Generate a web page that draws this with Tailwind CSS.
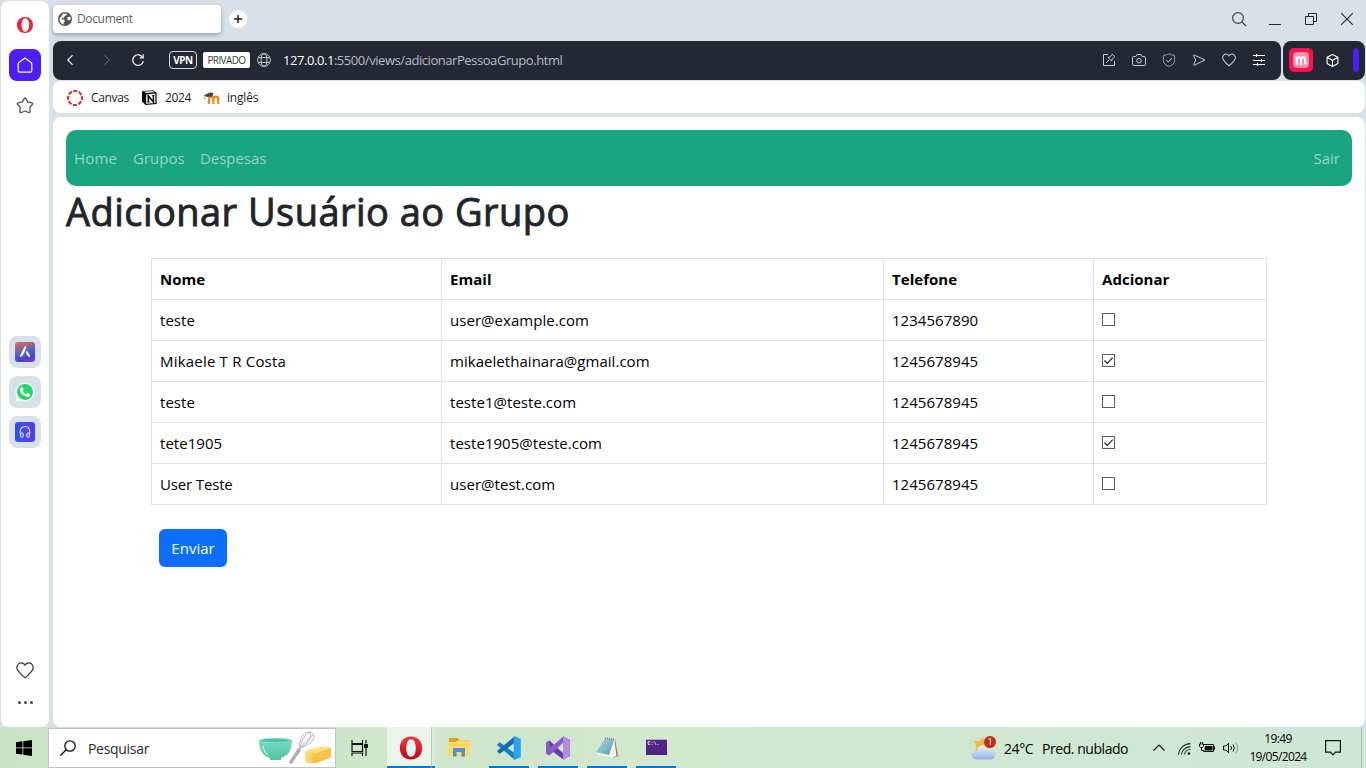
<!DOCTYPE html>
<html lang="pt-BR">
<head>
<meta charset="utf-8">
<title>Document</title>
<script src="https://cdn.jsdelivr.net/npm/@tailwindcss/browser@4"></script>
</head>
<body class="w-[1366px] h-[768px] overflow-hidden bg-[#d8e1e9] font-['Open_Sans','Noto_Sans',sans-serif] text-black flex flex-col">
<div class="flex h-[727px] shrink-0">
  <!-- Sidebar -->
  <aside class="ml-px mt-px w-12 h-[726px] bg-white rounded-lg flex flex-col items-center shrink-0">
    <svg class="mt-4 w-4 h-4" viewBox="0 0 16 16"><path fill="#ee2038" fill-rule="evenodd" d="M8 0C3.400 0 0 3.400 0 8s3.400 8 8 8 8-3.400 8-8S12.600 0 8 0zM8.300 1.300c2.300 0 3.900 3 3.900 6.700s-1.600 6.700-3.900 6.700S4.600 11.700 4.600 8s1.400-6.700 3.700-6.700z"/></svg>
    <div class="mt-4 size-8 rounded-lg bg-[#4b1efb] flex items-center justify-center">
      <svg class="size-4" viewBox="0 0 16 16" fill="none" stroke="#fff" stroke-width="1.200" stroke-linejoin="round"><path d="M8 .9 1.900 5.600Q1.200 6.200 1.200 7v6.500q0 1.600 1.600 1.600h10.400q1.600 0 1.600-1.600V7q0-.8-.7-1.400z"/></svg>
    </div>
    <svg class="mt-4 w-[18px] h-[17px]" viewBox="0 0 18 17" fill="none" stroke="#4a4f58" stroke-width="1.300" stroke-linejoin="round"><path d="M8.200 1.600Q9 .4 9.800 1.600L11.800 4.900 15.800 5.900Q17.200 6.400 16.300 7.500L13.800 10.400 14.100 14.500Q14 15.900 12.700 15.500L9 14 5.300 15.500Q4 15.900 3.900 14.500L4.200 10.400 1.700 7.500Q.8 6.400 2.200 5.900L6.200 4.900z"/></svg>
    <div class="mt-[222px] flex flex-col gap-2">
      <div class="size-8 rounded-lg bg-[#d8e1e9] flex items-center justify-center">
        <div class="size-5 rounded-[3px] bg-[linear-gradient(160deg,#e0704f_0%,#a8647c_25%,#4a66c8_50%,#4a3fd0_75%,#8a3bc8_100%)]">
          <svg class="size-5" viewBox="0 0 20 20" fill="#fff"><path d="M9.300 5.200q1-1.600 2.300-.4L8.400 12.500 6 15q-1.600-.3-.9-1.600zM11 9.500l1.200-.4 2.900 4.300q.4 1.500-1.100 1.600l-2.600-2.800z"/></svg>
        </div>
      </div>
      <div class="size-8 rounded-lg bg-[#d8e1e9] flex items-center justify-center">
        <svg class="size-5" viewBox="0 0 20 20"><path fill="#fff" d="M10 .5a9.500 9.500 0 1 1-4.500 17.900L.6 19.600l1.300-4.700A9.500 9.500 0 0 1 10 .5z"/><circle cx="10" cy="9.900" r="8" fill="#1fd867"/><path fill="#fff" d="M6.600 4.900c.6-.3 1 0 1.200.5l.8 1.900c.1.500-.7 1.100-.9 1.400.8 1.700 2.100 2.700 3.600 3.300.4-.2.900-1.200 1.400-1.100l2.100 1c.5.300.2 1.600-.2 2.100-1 1.100-2.600 1-3.900.5-2.800-1-4.700-2.900-5.500-5.500-.4-1.600.2-3.300 1.400-4.100z"/></svg>
      </div>
      <div class="size-8 rounded-lg bg-[#d8e1e9] flex items-center justify-center">
        <div class="size-5 rounded-[3px] bg-linear-to-r from-[#2452f0] to-[#5a35f5]">
          <svg class="size-5" viewBox="0 0 20 20" stroke="#dfe4ff" fill="none" stroke-width="1.100"><path d="M5.800 13.500C4 8 6 4.500 10 4.500s6 3.500 4.200 9"/><rect x="5.600" y="11" width="2.600" height="4.200" rx="1.200"/><rect x="11.800" y="11" width="2.600" height="4.200" rx="1.200"/></svg>
        </div>
      </div>
    </div>
    <svg class="mt-[214px] mr-px w-[18px] h-[17px]" viewBox="0 0 18 17" fill="none" stroke="#33383f" stroke-width="1.200" stroke-linejoin="round"><path d="M9 3.200C7.500.5 4.300.3 2.500 1.900c-2.100 2-2.100 5 .2 7.700C4.500 11.900 7 14.300 9 15.900c2-1.600 4.500-4 6.300-6.300 2.300-2.700 2.300-5.700.2-7.700C13.700.3 10.500.5 9 3.200z"/></svg>
    <div class="mt-[22px] flex gap-[3px]"><i class="size-[3px] rounded-full bg-[#444b54]"></i><i class="size-[3px] rounded-full bg-[#444b54]"></i><i class="size-[3px] rounded-full bg-[#444b54]"></i></div>
  </aside>

  <div class="ml-1 flex flex-col w-[1313px]">
    <!-- Tab strip -->
    <div class="h-[41px] flex items-start pt-[5px] shrink-0">
      <div class="w-[168px] h-7 bg-white rounded-[4px] shadow-[0_2px_4px_rgba(60,70,80,0.4)] flex items-center pl-[5px]">
        <svg class="size-[14px]" viewBox="0 0 14 14"><circle cx="7" cy="7" r="7" fill="#50545a"/><path fill="#fff" d="M5 1.700 9 1.500 8.600 3.300 6.600 4 6.300 5.600 4 6.300 3.700 7.500 6 7.600 7 9.300 5.600 10.600 5.700 12.400C3 12 1.500 9.500 1.500 7L3 4.500zM9.500 5.200l2.700-.6.500 2.700-1.600 1.200-1.900-1z"/></svg>
        <span class="ml-[5px] text-[12px] leading-4 text-[#5c5f64] tracking-[-0.35px]">Document</span>
      </div>
      <div class="ml-2 mt-[5px] size-[18px] rounded-full bg-white flex items-center justify-center">
        <svg class="size-2" viewBox="0 0 8 8" stroke="#202020" stroke-width="1.500"><path d="M4 0v8M0 4h8"/></svg>
      </div>
      <div class="ml-auto mt-[6px] mr-[13px] flex items-center">
        <svg class="size-4" viewBox="0 0 16 16" fill="none" stroke="#3c4047" stroke-width="1.200"><circle cx="7" cy="7" r="5.400"/><path d="m11 11 4 4"/></svg>
        <svg class="ml-[22px] w-3 h-4" viewBox="0 0 12 16"><path stroke="#25282d" d="M0 13.500h12"/></svg>
        <svg class="ml-6 size-3" viewBox="0 0 12 12" fill="none" stroke="#25282d"><path d="M.5 3.500h8v8h-8zM3.500 3.500v-3h8v8h-3"/></svg>
        <svg class="ml-6 size-3" viewBox="0 0 12 12" stroke="#25282d" stroke-width="1.100"><path d="m0 0 12 12M12 0 0 12"/></svg>
      </div>
    </div>

    <!-- Address bar -->
    <div class="h-[39px] flex gap-[2px] shrink-0">
      <div class="w-[1228px] bg-[#242834] rounded-lg flex items-center pb-px">
        <svg class="ml-[14px] w-[6px] h-[10px]" viewBox="0 0 6 10" fill="none" stroke="#fff" stroke-width="1.100"><path d="M5.500.3.7 5l4.800 4.700"/></svg>
        <svg class="ml-[31px] w-[6px] h-[10px]" viewBox="0 0 6 10" fill="none" stroke="#6b6f79"><path d="M.5.300 5.300 5 .5 9.700"/></svg>
        <svg class="ml-[22px] size-3" viewBox="0 0 12 12" fill="none" stroke="#f4f5f7" stroke-width="1.200"><path d="M10.600 3.300A5.300 5.300 0 1 0 11.300 7"/><path d="M11.200 .3v3.500H7.700"/></svg>
        <span class="ml-[25px] w-7 h-[18px] rounded-[4px] border border-[#d7d9de] flex items-center justify-center text-white text-[10px] font-bold tracking-[-0.4px]">VPN</span>
        <span class="ml-[6px] w-[47px] h-4 pt-px rounded-[2px] bg-white flex items-center justify-center text-[#3a3e48] text-[10px] leading-[15px] tracking-[-0.6px]">PRIVADO</span>
        <svg class="ml-[7px] size-[14px]" viewBox="0 0 14 14" fill="none" stroke="#d4d7dd" stroke-width=".9"><circle cx="7" cy="7" r="6.400"/><ellipse cx="7" cy="7" rx="3" ry="6.400"/><path d="M1.300 4.600h11.400M1.300 9.400h11.400"/></svg>
        <span class="ml-3 text-[13px] leading-4 text-[#b7bbc5] tracking-[-0.44px] whitespace-nowrap"><span class="text-white">127.0.0.1</span>:5500/views/adicionarPessoaGrupo.html</span>
        <div class="ml-auto mr-4 flex items-center gap-4 text-[#c9ccd3]">
          <svg class="size-[14px]" viewBox="0 0 14 14" fill="none" stroke="currentColor"><path d="M6 1.500H1.500v11h11V8M4 10l3-3M6 4.500 9.500 8l.7-2L12.800 3.700 10.300 1.200 8 3.900z"/></svg>
          <svg class="size-[14px]" viewBox="0 0 14 14" fill="none" stroke="currentColor"><path d="M1.800 3.500h2L5 1.500h4l1.200 2h2q1.300 0 1.300 1.300v6.400q0 1.300-1.300 1.300H1.800Q.5 12.500.5 11.200V4.800q0-1.300 1.300-1.300z"/><circle cx="7" cy="7.700" r="2.300"/></svg>
          <svg class="size-[14px]" viewBox="0 0 14 14" fill="none" stroke="#9a9eaa"><path d="M7 .6C5.400 1.800 3.500 2.300 1.400 2.300v5.200c0 3 2.500 5 5.600 6 3.100-1 5.600-3 5.600-6V2.300C10.500 2.300 8.600 1.800 7 .6z"/><path stroke="#d8dbe1" d="m4.200 7 2 2L10 5.300"/></svg>
          <svg class="size-[14px]" viewBox="0 0 14 14" fill="none" stroke="currentColor" stroke-linejoin="round"><path d="M2.300 2 13 7 2.300 12.300Q1.400 12.500 1.700 11.500L3.800 7 1.600 3Q1.300 1.700 2.300 2z"/></svg>
          <svg class="size-[14px]" viewBox="0 0 18 17" fill="none" stroke="currentColor" stroke-width="1.300"><path d="M9 3.200C7.500.5 4.300.3 2.500 1.900c-2.100 2-2.100 5 .2 7.700C4.500 11.900 7 14.300 9 15.900c2-1.600 4.500-4 6.300-6.300 2.300-2.700 2.300-5.700.2-7.700C13.700.3 10.500.5 9 3.200z"/></svg>
          <svg class="w-3 h-[14px] ml-px" viewBox="0 0 12 14" fill="none" stroke="#fff"><path d="M0 2.500h12M0 7.500h12M0 11.500h12M3.500 1v3M8.500 6v3M4.500 10v3"/></svg>
        </div>
      </div>
      <div class="w-[82px] bg-[#242834] rounded-lg flex items-center pb-px">
        <div class="ml-[6px] size-6 rounded-[5px] bg-[#fb1150] flex items-center justify-center"><div class="size-4 rounded-[4px] bg-[#fb8fae] flex items-center justify-center">
          <svg class="w-3 h-[9px]" viewBox="0 0 12 9" fill="none" stroke="#fff" stroke-width="2"><path d="M.3 1.500h1.500V9M1.900 4c0-3.600 4.100-3.600 4.100 0v5M6 4c0-3.600 4-3.600 4 0v2.500q0 1.400 2 1.200"/></svg></div></div>
        <svg class="ml-[13px] size-[13px]" viewBox="0 0 13 13" fill="none" stroke="#fff" stroke-width="1.100" stroke-linejoin="round"><path d="m6.500.6 5.400 2.700v6.200l-5.400 3-5.400-3V3.300zM1.100 3.500l5.400 2.700 5.400-2.700M6.500 6.200v6.300"/></svg>
        <div class="ml-[14px] w-[6px] h-6 rounded-[3px] bg-[#4b1efb]"></div>
      </div>
    </div>

    <!-- Bookmarks -->
    <div class="mt-px w-[1312px] h-8 pt-px rounded-lg bg-white flex items-center text-[12px] text-[#1e2024] shrink-0">
      <svg class="ml-[14px] size-4" viewBox="0 0 16 16" fill="none"><circle cx="8" cy="8" r="7" stroke="#c9372c" stroke-width="2.100" stroke-dasharray="4.100 1.398" stroke-dashoffset="2"/></svg>
      <span class="ml-2 w-[38px] tracking-[-0.35px]">Canvas</span>
      <svg class="ml-[13px] size-[15px]" viewBox="0 0 15 15"><path fill="#000" d="M0 1.200 10.800.2 14.600 2.800V14L3.600 15 0 11.500z"/><path fill="#fff" d="M2 1.800 10.500 1l2 1.300L4 3zM4.200 4.400l9.200-.8v9.300l-9.200.8z"/><path fill="none" stroke="#000" stroke-width="1.500" d="M6.400 12V6l5 6V5.600"/><path stroke="#000" d="M5.200 5.900h1.800M5.300 12h2.300M10.300 5.500h2.100"/></svg>
      <span class="ml-2 w-[26px] tracking-[-0.4px]">2024</span>
      <svg class="ml-[13px] w-4 h-3" viewBox="0 0 16 12"><path d="M5 12V7c0-3 4.300-3 4.300 0v5M9.300 7c0-3 4.900-3 4.900 0v5" fill="none" stroke="#f08a24" stroke-width="2.300"/><path fill="#4b4642" d="M0 3.300 6.500.2 9.500 1.500 8.500 4.500 3 5z"/><path stroke="#777" stroke-width=".7" d="M1 3.500v4"/></svg>
      <span class="ml-[7px] tracking-[-0.2px]">inglês</span>
    </div>

    <!-- Page -->
    <main class="mt-1 w-[1312px] h-[610px] rounded-lg bg-white px-[13px] pt-[13px] shrink-0 text-[15px]">
      <nav class="h-14 rounded-[10px] bg-[#1aa582] flex items-center px-2 pr-[12px] text-[#96d6c6]">
        <a class="w-[59px] tracking-[0.15px]">Home</a><a class="w-[67px]">Grupos</a><a class="tracking-[-0.05px]">Despesas</a><a class="ml-auto">Sair</a>
      </nav>
      <h1 class="h-[72px] pt-px text-[38px] leading-[48px] font-medium [-webkit-text-stroke:0.9px_#212529] text-[#212529] tracking-[0.46px] whitespace-nowrap">Adicionar Usuário ao Grupo</h1>
      <table class="ml-[85px] w-[1116px] table-fixed border-collapse text-left leading-6 tracking-[0.04px] [&_td]:border [&_th]:border [&_td]:border-[#dee2e6] [&_th]:border-[#dee2e6] [&_td]:h-[41px] [&_th]:h-[41px] [&_td]:px-2 [&_th]:px-2 [&_td]:py-0 [&_th]:py-0">
        <colgroup><col class="w-[290px]"><col class="w-[442px]"><col class="w-[210px]"><col></colgroup>
        <tr><th>Nome</th><th>Email</th><th>Telefone</th><th>Adcionar</th></tr>
        <tr><td>teste</td><td>user@example.com</td><td>1234567890</td><td><span class="block mb-[2px] size-[13px] border border-[#5f5f5f]"></span></td></tr>
        <tr><td><span class="tracking-[0.2px]">Mikaele T R Costa</span></td><td>mikaelethainara@gmail.com</td><td>1245678945</td><td><span class="block mb-[2px] size-[13px] border border-[#5f5f5f]"><svg class="size-[11px]" viewBox="0 0 11 11" fill="none" stroke="#222" stroke-width="1.200"><path d="M1.500 5.500 4.300 8.300 9.700 2.600"/></svg></span></td></tr>
        <tr><td>teste</td><td>teste1@teste.com</td><td>1245678945</td><td><span class="block mb-[2px] size-[13px] border border-[#5f5f5f]"></span></td></tr>
        <tr><td>tete1905</td><td>teste1905@teste.com</td><td>1245678945</td><td><span class="block mb-[2px] size-[13px] border border-[#5f5f5f]"><svg class="size-[11px]" viewBox="0 0 11 11" fill="none" stroke="#222" stroke-width="1.200"><path d="M1.500 5.500 4.300 8.300 9.700 2.600"/></svg></span></td></tr>
        <tr><td><span class="tracking-[-0.15px]">User Teste</span></td><td>user@test.com</td><td>1245678945</td><td><span class="block mb-[2px] size-[13px] border border-[#5f5f5f]"></span></td></tr>
      </table>
      <button class="ml-[93px] mt-6 w-[68px] h-[38px] rounded-md bg-[#0d6efd] text-white">Enviar</button>
    </main>
  </div>
</div>

<!-- Taskbar -->
<footer class="h-[41px] flex items-center bg-linear-to-r from-[#c9e4c5] via-[#d2e8cf] to-[#cfe6d6] shrink-0">
  <svg class="ml-4 mt-px w-4 h-4" viewBox="0 0 16 16"><path d="M0 2.200 6.500 1.300v6.200H0zM7.300 1.200 16 0v7.500H7.300zM0 8.300h6.500v6.300L0 13.700zM7.300 8.300H16V16l-8.700-1.200z"/></svg>
  <div class="ml-4 mt-px w-[288px] h-10 bg-white border border-[#c3c3c3] flex items-center">
    <svg class="ml-[11px] size-4" viewBox="0 0 16 16" fill="none" stroke="#111" stroke-width="1.300"><circle cx="10" cy="6" r="5.200"/><path d="M6.200 9.800.4 15.600"/></svg>
    <span class="ml-3 mt-px text-[14px] text-[#2b2b2b] tracking-[-0.3px]">Pesquisar</span>
    <svg class="ml-auto mr-[3px] w-[74px] h-9" viewBox="0 0 74 36">
      <defs><linearGradient id="bowl" x2="0" y2="1"><stop stop-color="#79dcc4"/><stop offset="1" stop-color="#58bda6"/></linearGradient><linearGradient id="butter"><stop stop-color="#ffe07a"/><stop offset="1" stop-color="#f8c04a"/></linearGradient></defs>
      <path fill="url(#bowl)" d="M1 11c0 9 4 15 11 17v2h11v-2c7-2 11-8 11-17z"/><ellipse cx="17.500" cy="11" rx="16.500" ry="3" fill="#4fbfa6"/><ellipse cx="17.500" cy="10.500" rx="16" ry="2.400" fill="none" stroke="#9aeeda"/><path d="M5 16q1 6 5 9" stroke="#b4f4e4" stroke-width="1.500" fill="none"/>
      <path d="m33 32 8-12" stroke="#b5abc0" stroke-width="3.600" stroke-linecap="round"/><path d="M42 18c-2-8 4-17 10-16 8 2 4 12-10 16zM42 18c1-7 5-14 10-16M42 18C49 14 55 8 52 2M42 18C45 14 52 7 55 5" fill="none" stroke="#aaa3b3" stroke-width=".8"/>
      <path fill="#ffdf7a" d="m47 21 16-4.500 10 1L57 23.500z"/><path fill="#f7c04a" d="m57 23.500 16-6v10l-16 6z"/><path fill="url(#butter)" d="m47 21 10 2.500v10l-10-1z"/>
    </svg>
  </div>
  <svg class="ml-[15px] w-[18px] h-4" viewBox="0 0 18 16" fill="none" stroke="#111" stroke-width="1.200"><path d="M1 0v3.500h10.500V0M1 4.500h10.500v7H1zM1 16v-3h10.500v3M15 0v3.500M15 8v8"/><path fill="#111" d="M13.700 4.700h2.600v2.600h-2.600z"/></svg>
  <div class="ml-[18px] w-[45px] h-full bg-[#ebf5ea] border-r border-[#b5c9b6] border-b-2 border-b-[#0078d4] flex items-center justify-center">
    <svg class="w-6 h-6 mr-[-4px] mt-[3px]" viewBox="0 0 24 24"><defs><linearGradient id="op" x2="0" y2="1"><stop stop-color="#ff3040"/><stop offset="1" stop-color="#b50b18"/></linearGradient></defs><path fill="url(#op)" fill-rule="evenodd" d="M12 .5C5 .5.800 5.500.800 12S5 23.500 12 23.500 23.200 18.500 23.200 12 19 .5 12 .5zm0 2.700c3.300 0 4.800 4 4.800 8.800s-1.500 8.800-4.800 8.800S7.200 16.800 7.200 12 8.700 3.200 12 3.200z"/></svg>
  </div>
  <div class="w-[3px] h-full bg-[#dcecdc] border-b-2 border-[#0078d4]"></div>
  <div class="ml-1 w-10 h-full border-b-2 border-transparent flex items-center justify-center pt-px">
    <svg class="w-[22px] h-5" viewBox="0 0 22 20"><path fill="#dba21c" d="M1 1h9l1.500 2.500H21V6H1z"/><path fill="#ffd867" d="M0 5h8l2-1.500h12V19H0z"/><path fill="#4796cf" d="M5 11h12v8.500h-3.500V15h-5v4.500H5z"/></svg>
  </div>
  <div class="ml-[10px] w-10 h-full border-b-2 border-[#0078d4] flex items-center justify-center pt-[2px]">
    <svg class="size-6" viewBox="0 0 24 24"><path fill="#1780c4" d="M.5 8.200 2 6.700q.7-.5 1.500 0L18 17.500V24L.6 9.500q-.6-.7-.1-1.300z"/><path fill="#0f6db0" d="M.5 15.800 2 17.300q.7.500 1.500 0L18 6.500V0L.6 14.500q-.6.700-.1 1.300z"/><path fill="#2ba5ec" d="m17.500 0 5.500 2.500q.8.500.8 1.500v16q0 1-.8 1.500L17.500 24q-.8-.2-.8-1V1q0-.8.8-1z"/></svg>
  </div>
  <div class="ml-[9px] w-10 h-full border-b-2 border-[#0078d4] flex items-center justify-center pt-[2px]">
    <svg class="size-6" viewBox="0 0 24 24"><path fill="#6b3ba8" d="M0 6.500 3.500 4.500 18 18V24L4 13.500 3 17 0 18z"/><path fill="#8b5cc7" d="M0 17.500 3.500 19.500 18 6V0L4 12 3.500 7 0 6.500z"/><path fill="#b58ae6" d="m17 0 7 3.500v17L17 24z"/><path fill="#8a59c8" d="M0 6.500 3.500 4.500v15L0 17.500z"/></svg>
  </div>
  <div class="ml-[9px] w-10 h-full border-b-2 border-[#0078d4] flex items-center justify-center pt-[2px]">
    <svg class="w-6 h-6" viewBox="0 0 24 24"><defs><linearGradient id="np" x2="1" y2="1"><stop stop-color="#b5dfe3"/><stop offset="1" stop-color="#4f9cac"/></linearGradient></defs><path fill="#8d7b53" d="m20 3 3 17-5 2z"/><path fill="#f3f5f2" d="m19 2 2.500 18-5 2-15.500-4z"/><path fill="url(#np)" d="M10 2.500 19.500 3.500 14 19 1 16z"/><path d="M10 2.300 20 3.300" stroke="#6c7779" stroke-width="1.500" stroke-dasharray="1 1"/></svg>
  </div>
  <div class="ml-[9px] w-10 h-full border-b-2 border-[#0078d4] flex items-center justify-center pt-px">
    <div class="w-[21px] h-4 bg-[#4f2583] border-t border-[#b9a6cc] text-white text-[5px] leading-[8px] pl-[2px] font-['Liberation_Mono',monospace] font-bold">C:\.</div>
  </div>
  <svg class="ml-[295px] mt-px w-7 h-6" viewBox="0 0 28 24"><path fill="#f5b93b" d="M2.500 4.500 8 5.500 12 1l1.500 6 5 5-9 5-5.500-2 1.500-4.500z"/><defs><linearGradient id="cl" x2="0" y2="1"><stop stop-color="#eef3fd"/><stop offset="1" stop-color="#8fb3ea"/></linearGradient></defs><path fill="url(#cl)" d="M6 23.500c-7-.5-7-8-.5-8.500C7 8 15 8 17 13.500c9-1 9.500 9.500 2.500 10z"/><circle cx="19" cy="6" r="6" fill="#c42b1c"/><text x="19" y="9.300" font-size="9" text-anchor="middle" fill="#fff">1</text></svg>
  <span class="ml-[5px] mt-px w-[38px] text-[14px] tracking-[-0.4px] whitespace-nowrap">24°C</span>
  <span class="w-[86px] mt-px text-[14px] tracking-[-0.45px] whitespace-nowrap">Pred. nublado</span>
  <svg class="ml-[25px] w-3 h-[7px]" viewBox="0 0 12 7" fill="none" stroke="#111" stroke-width="1.200"><path d="M.5 6.500 6 1l5.500 5.500"/></svg>
  <svg class="ml-[13px] mt-[2px] w-[13px] h-3" viewBox="0 0 13 12" fill="none" stroke="#222" stroke-width="1.100"><path d="M.5 11.500C1 5.500 6 .8 12.500.6M3.400 11.500C3.800 7.300 7.500 3.800 12.500 3.600M6.500 11.500c.3-2.600 2.700-4.900 6-5"/><circle cx="11" cy="10.500" r="1.300" fill="#111" stroke="none"/></svg>
  <svg class="ml-2 w-4 h-[11px]" viewBox="0 0 16 11" fill="none" stroke="#111"><path d="M5 2.500h9.500v7h-10V8M14.500 4.500h1v3h-1M1.500 0v2M3.500 0v2M.5 2h4v2.500l-1 1h-2l-1-1zM2.500 5.500v3h2"/><path fill="#111" stroke="none" d="M6 4h7.500v4.500H5.500z"/></svg>
  <svg class="ml-2 w-4 h-3" viewBox="0 0 16 12" fill="none" stroke="#111"><path d="M.5 4h2.300L5.500 1.200v9.600L2.800 8H.5zM7.800 4q1.400 2 0 4M10 2.500q2.700 3.500 0 7"/><path stroke="#8a9a8c" d="M12.800.8q4 5.200 0 10.400"/></svg>
  <div class="ml-[10px] w-[58px] flex flex-col items-center text-[12px] leading-[18px] tracking-[-0.65px] whitespace-nowrap"><span>19:49</span><span>19/05/2024</span></div>
  <svg class="ml-[18px] w-4 h-4" viewBox="0 0 16 16" fill="none" stroke="#111" stroke-width="1.200"><path d="M.6.700h14.800v11.500H10.500L8 14.800 5.500 12.200H.6z"/></svg>
  <div class="ml-auto mr-1 w-px h-full bg-[#aabfac]"></div>
</footer>
</body>
</html>
